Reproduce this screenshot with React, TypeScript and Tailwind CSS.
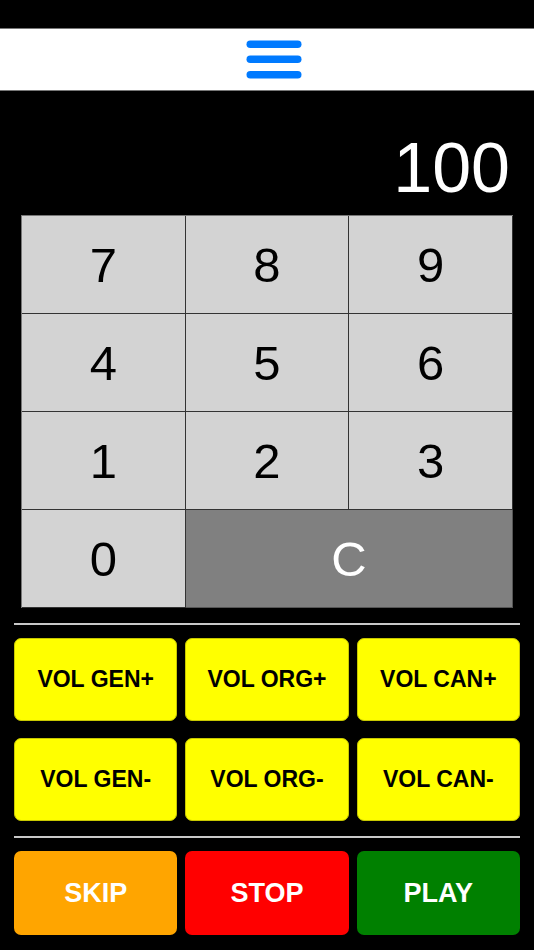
const keys = ["7", "8", "9", "4", "5", "6", "1", "2", "3"];

const volume = ["VOL GEN+", "VOL ORG+", "VOL CAN+", "VOL GEN-", "VOL ORG-", "VOL CAN-"];

const transport = [
  { label: "SKIP", color: "bg-[#ffa500]" },
  { label: "STOP", color: "bg-[#ff0000]" },
  { label: "PLAY", color: "bg-[#008000]" },
];

function Menu() {
  return (
    <svg width="56" height="40" viewBox="0 0 56 40" fill="none">
      <rect x="0.5" y="0.5" width="55" height="7.5" rx="3.75" fill="#007aff" />
      <rect x="0.5" y="15.5" width="55" height="7.5" rx="3.75" fill="#007aff" />
      <rect x="0.5" y="31" width="55" height="7.5" rx="3.75" fill="#007aff" />
    </svg>
  );
}

export default function App() {
  return (
    <div className="flex min-h-[950px] w-[534px] flex-col bg-black font-['Liberation_Sans',Arial,sans-serif]">
      <div className="h-[28px]" />

      <header className="flex h-[63px] items-center justify-center border-y border-[#777] bg-white pl-[13px]">
        <Menu />
      </header>

      <div className="flex justify-end pt-[42px] pr-[24px] pb-[12px]">
        <span className="text-[70px] leading-[70px] text-white">100</span>
      </div>

      <div className="mx-[21px] grid grid-cols-3 border-t border-l border-[#777]">
        {keys.map((k) => (
          <button
            key={k}
            className="flex h-[98px] items-center justify-center border-r border-b border-[#333] bg-[#d3d3d3] pt-[2px] text-[49px] text-black"
          >
            {k}
          </button>
        ))}
        <button className="flex h-[98px] items-center justify-center border-r border-b border-[#333] bg-[#d3d3d3] pt-[2px] text-[49px] text-black">
          0
        </button>
        <button className="col-span-2 flex h-[98px] items-center justify-center border-r border-b border-[#555] bg-[#808080] pt-[2px] text-[49px] text-white">
          C
        </button>
      </div>

      <div className="mx-[14px] mt-[15px] h-[2px] bg-[#c8c8c8]" />

      <div className="mx-[14px] mt-[13px] grid grid-cols-3 gap-x-[8px] gap-y-[17px]">
        {volume.map((v) => (
          <button
            key={v}
            className="flex h-[83px] items-center justify-center rounded-[7px] border border-[#c8c800] bg-[#ffff00] text-[23px] font-bold text-black"
          >
            {v}
          </button>
        ))}
      </div>

      <div className="mx-[14px] mt-[15px] h-[2px] bg-[#c8c8c8]" />

      <div className="mx-[14px] mt-[13px] grid grid-cols-3 gap-x-[8px]">
        {transport.map((t) => (
          <button
            key={t.label}
            className={`flex h-[84px] items-center justify-center rounded-[7px] text-[27px] font-bold text-white ${t.color}`}
          >
            {t.label}
          </button>
        ))}
      </div>
    </div>
  );
}
